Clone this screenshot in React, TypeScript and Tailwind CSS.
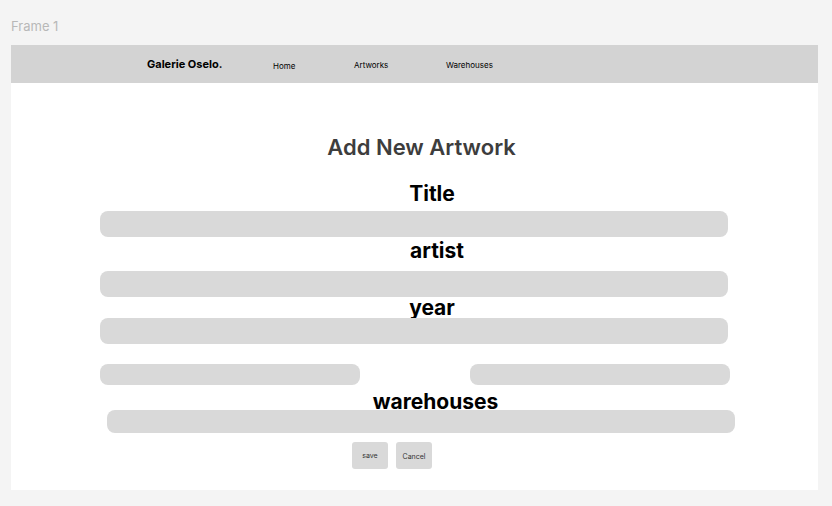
export default function App() {
  const label = "text-[21px] leading-[24px] font-bold text-black text-center";
  const field = "h-[26px] rounded-[8px] bg-[#d9d9d9]";
  return (
    <div className="w-[832px] h-[506px] bg-[#f4f4f4] font-['Inter',sans-serif] flex flex-col">
      <p className="ml-[11px] mt-[17px] h-[28px] text-[13px] leading-[18px] text-[#b8b8b8]">Frame 1</p>

      <div className="ml-[11px] w-[807px] h-[445px] bg-white flex flex-col">
        <nav className="h-[38px] bg-[#d3d3d3] flex items-center pt-[1px]">
          <span className="ml-[136px] w-[126px] text-[11px] font-bold text-black">Galerie Oselo.</span>
          <a href="#home" className="w-[81px] text-[8px] text-black pt-[2px]">Home</a>
          <a href="#artworks" className="w-[92px] text-[8px] text-black">Artworks</a>
          <a href="#warehouses" className="text-[8px] text-black">Warehouses</a>
        </nav>

        <h1 className="mt-[50px] pl-[14px] text-center text-[22px] leading-[28px] font-semibold text-[#3d3d3d]">Add New Artwork</h1>

        <div className="ml-[89px] w-[628px] flex flex-col">
          <label className={`${label} mt-[21px] pl-[36px]`}>Title</label>
          <div className={`${field} mt-[5px]`} />
          <label className={`${label} mt-[2px] pl-[46px]`}>artist</label>
          <div className={`${field} mt-[8px]`} />
          <label className={`${label} mt-[-1px] pl-[36px] h-[22px]`}>year</label>
          <div className={`${field} mt-[0px]`} />
          <div className="mt-[20px] w-[630px] flex justify-between">
            <div className="w-[260px] h-[21px] rounded-[8px] bg-[#d9d9d9]" />
            <div className="w-[260px] h-[21px] rounded-[8px] bg-[#d9d9d9]" />
          </div>
        </div>

        <label className={`${label} mt-[5px] pl-[42px] h-[22px]`}>warehouses</label>
        <div className="ml-[96px] w-[628px] h-[23px] rounded-[8px] bg-[#d9d9d9] mt-[-2px]" />

        <div className="mt-[9px] ml-[341px] flex gap-[8px]">
          <button className="w-[36px] h-[27px] rounded-[3px] bg-[#d9d9d9] text-[7px] text-[#333] pt-[1px]">save</button>
          <button className="w-[36px] h-[27px] rounded-[3px] bg-[#d9d9d9] text-[7px] text-[#333] pt-[3px]">Cancel</button>
        </div>
      </div>
    </div>
  );
}
